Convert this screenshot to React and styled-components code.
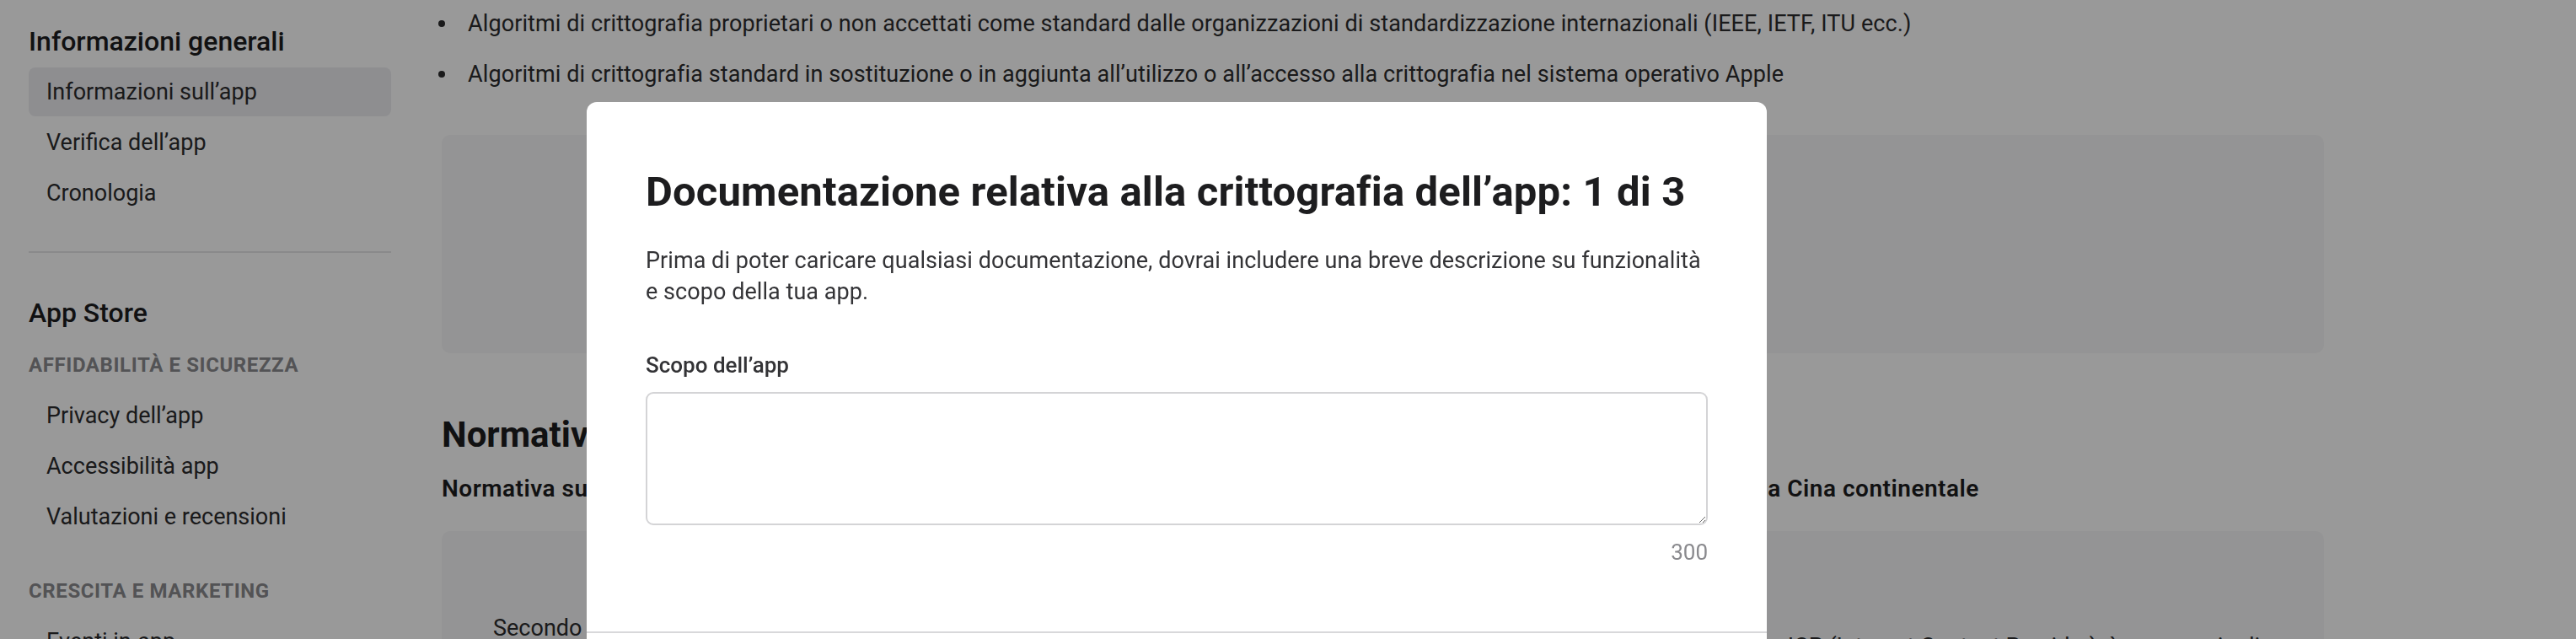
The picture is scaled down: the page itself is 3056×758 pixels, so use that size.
import React from 'react'
import styled, { createGlobalStyle } from 'styled-components'

const GlobalStyle = createGlobalStyle`
  html, body {
    margin: 0;
    height: 100%;
    overflow: hidden;
    background: #fff;
  }
  body {
    font-family: Roboto, "Liberation Sans", sans-serif;
    color: #1d1d1f;
  }
  * { box-sizing: border-box; }
`

const GROUPS = [
  {
    title: 'Informazioni generali',
    sections: [
      { items: ['Informazioni sull’app', 'Verifica dell’app', 'Cronologia'] },
    ],
  },
  {
    title: 'App Store',
    sections: [
      { label: 'Affidabilità e sicurezza', items: ['Privacy dell’app', 'Accessibilità app', 'Valutazioni e recensioni'] },
      { label: 'Crescita e marketing', items: ['Eventi in-app', 'Promo code'] },
    ],
  },
]

const BULLETS = [
  'Algoritmi di crittografia proprietari o non accettati come standard dalle organizzazioni di standardizzazione internazionali (IEEE, IETF, ITU ecc.)',
  'Algoritmi di crittografia standard in sostituzione o in aggiunta all’utilizzo o all’accesso alla crittografia nel sistema operativo Apple',
]

const SUBTITLE = 'Normativa sulla crittografia per la distribuzione delle app sull’App Store di Apple Inc. nel paese o nell’area geografica della Cina continentale'

const App = () => {
  return (
    <>
      <GlobalStyle />
      <Page>
        <Sidebar>
          {GROUPS.map((g, gi) => (
            <Group key={g.title} $first={gi === 0}>
              <GroupTitle>{g.title}</GroupTitle>
              {g.sections.map((s, si) => (
                <Section key={si} $spaced={si > 0}>
                  {s.label && <SectionLabel>{s.label}</SectionLabel>}
                  {s.items.map((it) => (
                    <NavItem key={it} $active={it === 'Informazioni sull’app'}>{it}</NavItem>
                  ))}
                </Section>
              ))}
            </Group>
          ))}
        </Sidebar>

        <Main>
          <BulletList>
            {BULLETS.map((b) => <Bullet key={b}>{b}</Bullet>)}
          </BulletList>
          <Card $height={259} />
          <Heading>Normativa sulla crittografia</Heading>
          <SubHeading>{SUBTITLE}</SubHeading>
          <Card>
            <CardColumns>
              <CardText>Secondo la normativa vigente,</CardText>
              <CardText $lower>le app devono disporre di una licenza ICP (Internet Content Provider), è necessario di</CardText>
            </CardColumns>
          </Card>
        </Main>
      </Page>

      <Overlay>
        <Modal>
          <ModalTitle>Documentazione relativa alla crittografia dell’app: 1 di 3</ModalTitle>
          <ModalText>
            Prima di poter caricare qualsiasi documentazione, dovrai includere una breve descrizione su funzionalità
            e scopo della tua app.
          </ModalText>
          <FieldLabel htmlFor="scopo">Scopo dell’app</FieldLabel>
          <TextArea id="scopo" />
          <Counter>300</Counter>
          <ModalFooter />
        </Modal>
      </Overlay>
    </>
  )
}

const Page = styled.div`
  display: flex;
  align-items: flex-start;
`

const Sidebar = styled.nav`
  width: 464px;
  flex-shrink: 0;
  padding: 29px 0 0 34px;
`

const Group = styled.div`
  ${(p) => !p.$first && `
    margin-top: 40px;
    padding-top: 51px;
    border-top: 2px solid #e6e6e8;
  `}
`

const GroupTitle = styled.div`
  font-size: 32px;
  line-height: 40px;
  font-weight: 500;
  color: #1d1d1f;
  margin-bottom: 11px;
`

const Section = styled.div`
  margin-top: ${(p) => (p.$spaced ? '43px' : '0')};
`

const SectionLabel = styled.div`
  font-size: 24px;
  line-height: 32px;
  font-weight: 700;
  letter-spacing: 0.6px;
  text-transform: uppercase;
  color: #8a8a8e;
  margin: 26px 0 15px;
`

const NavItem = styled.div`
  height: 58px;
  margin-bottom: 2px;
  padding: 0 21px;
  display: flex;
  align-items: center;
  border-radius: 8px;
  font-size: 27px;
  color: #2c2c2e;
  background: ${(p) => (p.$active ? '#ededf0' : 'transparent')};
`

const Main = styled.main`
  flex: 1;
  min-width: 0;
  max-width: 2293px;
  padding: 8px 0 0 60px;
`

const BulletList = styled.ul`
  list-style: none;
  margin: 0 0 52px;
  padding: 0;
`

const Bullet = styled.li`
  display: flex;
  font-size: 27px;
  line-height: 40px;
  letter-spacing: 0.1px;
  color: #2c2c2e;
  margin-bottom: 20px;
  &:last-child { margin-bottom: 0; }
  &::before {
    content: "";
    flex-shrink: 0;
    width: 8px;
    height: 8px;
    margin: 16px 27px 0 -4px;
    border-radius: 50%;
    background: #2c2c2e;
  }
`

const Card = styled.div`
  background: #f7f7f8;
  border-radius: 10px;
  min-height: ${(p) => (p.$height ? `${p.$height}px` : 'auto')};
  padding: 95px 61px 40px;
`

const CardColumns = styled.div`
  display: grid;
  grid-template-columns: 1fr 1fr;
  gap: 60px;
`

const CardText = styled.p`
  margin: ${(p) => (p.$lower ? '22px' : '0')} 0 0;
  font-size: 27px;
  line-height: 40px;
  color: #2c2c2e;
`

const Heading = styled.h2`
  margin: 72px 0 0;
  font-size: 42px;
  line-height: 49px;
  font-weight: 700;
  color: #1d1d1f;
`

const SubHeading = styled.h3`
  margin: 22px 0 32px;
  font-size: 28px;
  line-height: 36px;
  font-weight: 600;
  letter-spacing: 0.5px;
  color: #1d1d1f;
  white-space: nowrap;
`

const Overlay = styled.div`
  position: fixed;
  inset: 0;
  background: rgba(0, 0, 0, 0.4);
`

const Modal = styled.div`
  position: absolute;
  left: 696px;
  top: 121px;
  width: 1400px;
  background: #fff;
  border-radius: 12px;
  padding: 78px 70px 0;
`

const ModalTitle = styled.h1`
  margin: 0;
  font-size: 49px;
  line-height: 58px;
  font-weight: 700;
  letter-spacing: 0.15px;
  color: #1d1d1f;
`

const ModalText = styled.p`
  margin: 34px 0 0;
  font-size: 27px;
  line-height: 37px;
  letter-spacing: 0.05px;
  color: #333336;
`

const FieldLabel = styled.label`
  display: block;
  margin-top: 50px;
  font-size: 26px;
  line-height: 36px;
  font-weight: 500;
  color: #333336;
`

const TextArea = styled.textarea`
  display: block;
  width: 100%;
  height: 158px;
  margin-top: 14px;
  border: 2px solid #d4d4d6;
  border-radius: 9px;
  font: inherit;
  outline: none;
`

const Counter = styled.div`
  margin-top: 15px;
  text-align: right;
  font-size: 26px;
  line-height: 34px;
  color: #8a8a8e;
`

const ModalFooter = styled.div`
  margin: 77px -70px 0;
  height: 120px;
  border-top: 2px solid #d8d8da;
`

export default App
